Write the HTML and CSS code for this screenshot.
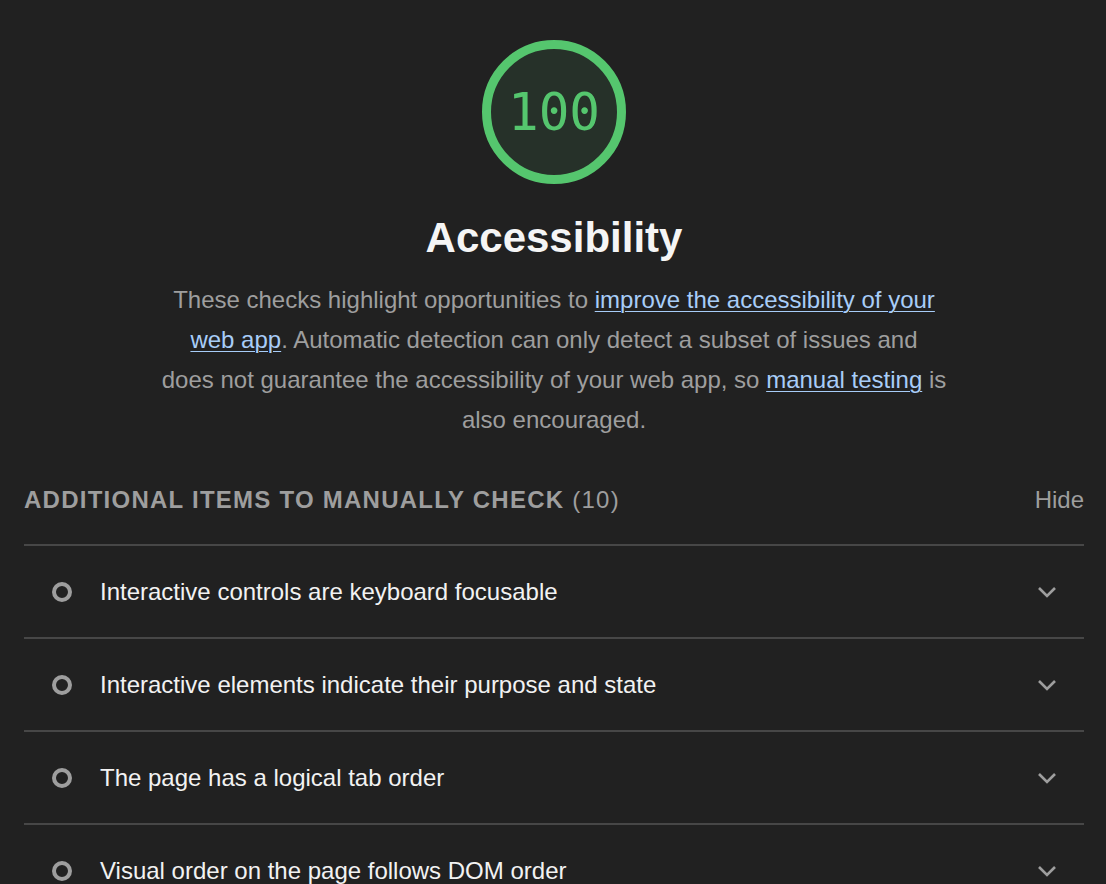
FILE: index.html
```html
<!DOCTYPE html>
<html lang="en">
<head>
<meta charset="utf-8">
<title>Accessibility</title>
<link rel="stylesheet" href="styles.css">
</head>
<body>
<div class="report">
  <header class="cat-header">
    <div class="gauge">
      <svg class="gauge-svg" width="144" height="144" viewBox="0 0 144 144">
        <circle cx="72" cy="72" r="67.5" fill="#263129" stroke="#55c66e" stroke-width="9"/>
      </svg>
      <span class="score">100</span>
    </div>
    <h1 class="cat-title">Accessibility</h1>
    <p class="cat-desc">These checks highlight opportunities to <a href="#">improve the accessibility of your web app</a>. Automatic detection can only detect a subset of issues and does not guarantee the accessibility of your web app, so <a href="#">manual testing</a> is also encouraged.</p>
  </header>

  <section class="group">
    <div class="group-head">
      <span class="group-title">Additional items to manually check <span class="count">(10)</span></span>
      <span class="hide">Hide</span>
    </div>

    <div class="audit">
      <span class="audit-icon"></span>
      <span class="audit-title">Interactive controls are keyboard focusable</span>
      <svg class="chevron" width="20" height="12" viewBox="0 0 20 12"><path d="M2 2 L10 10 L18 2" fill="none" stroke="#9e9e9e" stroke-width="2.6"/></svg>
    </div>
    <div class="audit">
      <span class="audit-icon"></span>
      <span class="audit-title">Interactive elements indicate their purpose and state</span>
      <svg class="chevron" width="20" height="12" viewBox="0 0 20 12"><path d="M2 2 L10 10 L18 2" fill="none" stroke="#9e9e9e" stroke-width="2.6"/></svg>
    </div>
    <div class="audit">
      <span class="audit-icon"></span>
      <span class="audit-title">The page has a logical tab order</span>
      <svg class="chevron" width="20" height="12" viewBox="0 0 20 12"><path d="M2 2 L10 10 L18 2" fill="none" stroke="#9e9e9e" stroke-width="2.6"/></svg>
    </div>
    <div class="audit">
      <span class="audit-icon"></span>
      <span class="audit-title">Visual order on the page follows DOM order</span>
      <svg class="chevron" width="20" height="12" viewBox="0 0 20 12"><path d="M2 2 L10 10 L18 2" fill="none" stroke="#9e9e9e" stroke-width="2.6"/></svg>
    </div>
  </section>
</div>
</body>
</html>
```

FILE: styles.css
```css
html, body {
  margin: 0;
  padding: 0;
  background: #212121;
}

body {
  font-family: "Liberation Sans", Arial, Helvetica, sans-serif;
  color: #f2f2f2;
}

.report {
  padding: 40px 22px 0 24px;
}

.cat-header {
  display: flex;
  flex-direction: column;
  align-items: center;
}

.gauge {
  display: grid;
  width: 144px;
  height: 144px;
}

.gauge-svg,
.score {
  grid-area: 1 / 1;
}

.score {
  display: flex;
  align-items: center;
  justify-content: center;
  font-family: "DejaVu Sans Mono", "Liberation Mono", monospace;
  font-size: 51px;
  color: #55c66e;
  line-height: 1;
}

.cat-title {
  margin: 28px 0 0;
  font-size: 42px;
  line-height: 52px;
  font-weight: 700;
  color: #f5f5f5;
}

.cat-desc {
  margin: 16px 0 0;
  max-width: 785px;
  text-align: center;
  font-size: 24px;
  line-height: 40px;
  color: #9e9e9e;
}

.cat-desc a {
  color: #a8cdf8;
  text-decoration: underline;
  text-decoration-thickness: 1px;
  text-underline-offset: 3px;
}

.group {
  margin-top: 40px;
}

.group-head {
  display: flex;
  justify-content: space-between;
  align-items: center;
  height: 40px;
  padding-bottom: 24px;
  border-bottom: 2px solid #474747;
}

.group-title {
  font-size: 24px;
  font-weight: 700;
  letter-spacing: 1.25px;
  text-transform: uppercase;
  color: #9e9e9e;
}

.group-title .count {
  font-weight: 400;
}

.hide {
  font-size: 24px;
  color: #9e9e9e;
}

.audit {
  display: flex;
  align-items: center;
  height: 91px;
  border-bottom: 2px solid #474747;
  padding: 0 27px 0 28px;
}

.audit-icon {
  box-sizing: border-box;
  width: 20px;
  height: 20px;
  border: 4px solid #9e9e9e;
  border-radius: 50%;
  flex: none;
}

.audit-title {
  flex: 1;
  margin-left: 28px;
  font-size: 24px;
  color: #f2f2f2;
}

.chevron {
  flex: none;
}
```
